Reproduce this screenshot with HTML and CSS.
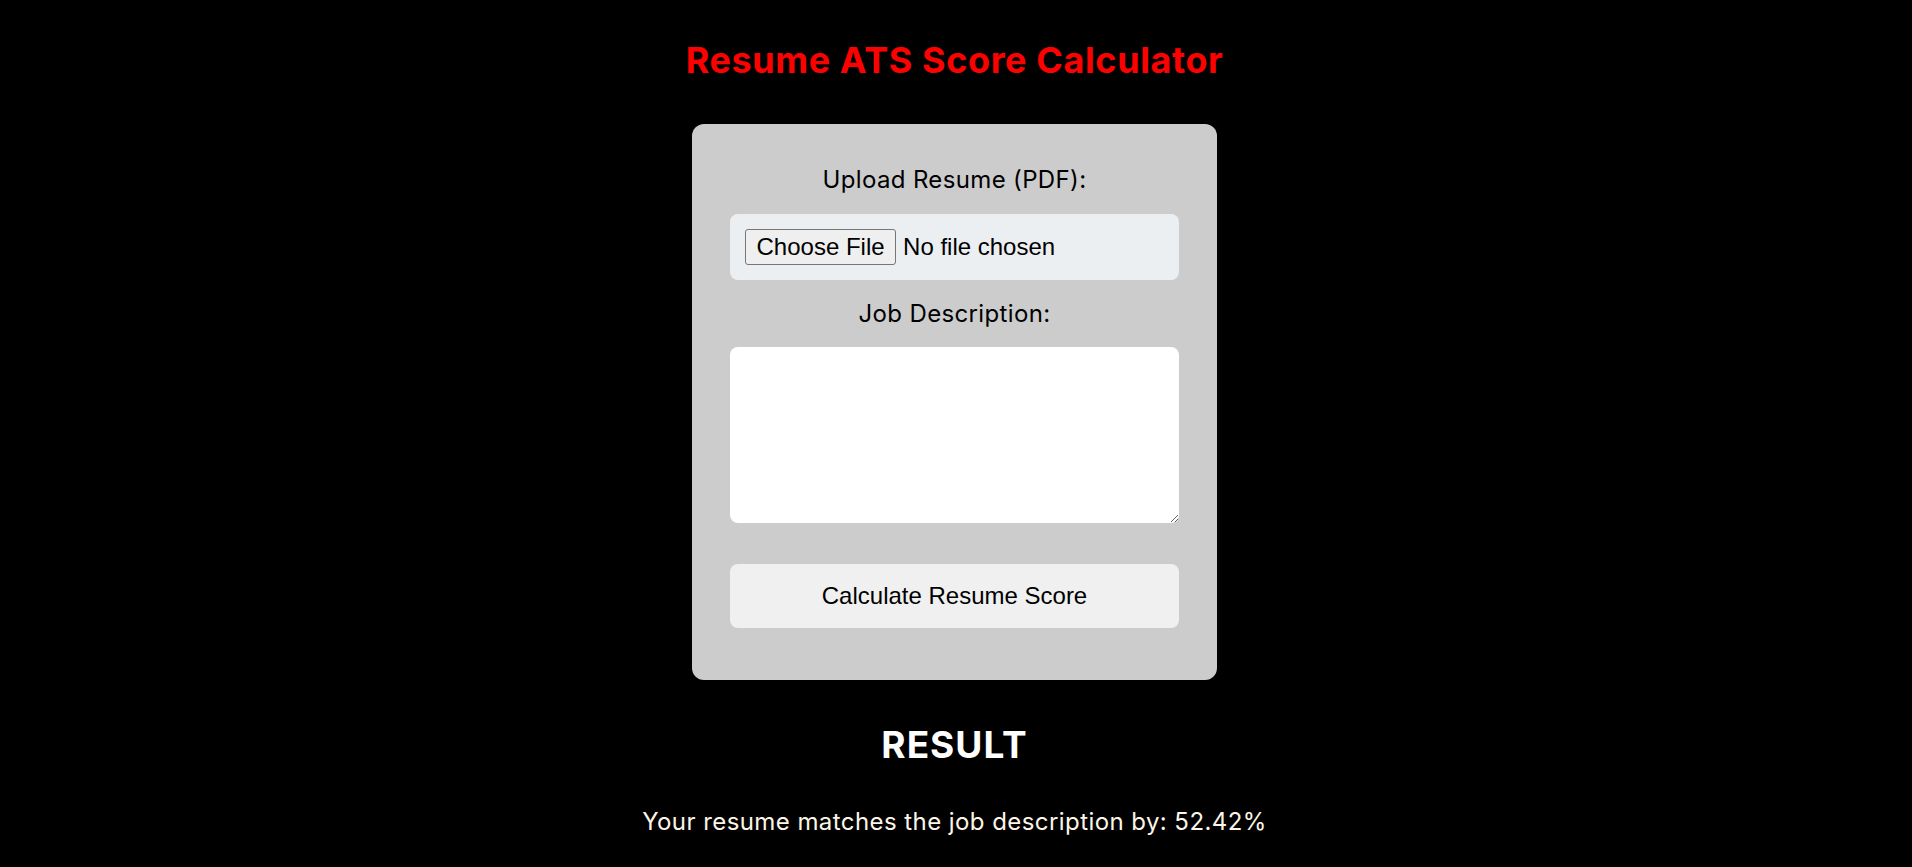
FILE: index.html
```html
<!DOCTYPE html>
<html lang="en">
<head>
<meta charset="utf-8">
<title>Resume ATS Score Calculator</title>
<link rel="stylesheet" href="styles.css">
</head>
<body>
<main class="page">
  <h1 class="title">Resume ATS Score Calculator</h1>
  <form class="card">
    <label class="field-label" for="resume">Upload Resume (PDF):</label>
    <label class="file-box" for="resume">
      <span class="file-btn">Choose File</span>
      <span class="file-name">No file chosen</span>
      <input class="file-hidden" type="file" id="resume" accept=".pdf">
    </label>
    <label class="field-label" for="jd">Job Description:</label>
    <textarea class="jd" id="jd"></textarea>
    <button class="submit" type="button">Calculate Resume Score</button>
  </form>
  <h2 class="result-title">RESULT</h2>
  <p class="result-text">Your resume matches the job description by: 52.42%</p>
</main>
</body>
</html>
```
FILE: styles.css
```css
* { box-sizing: border-box; }
html, body { margin: 0; padding: 0; background: #000; }
body { font-family: Inter, "Open Sans", sans-serif; }

.page {
  display: flex;
  flex-direction: column;
  align-items: center;
  padding: 39px 3px 0 0;
}

.title {
  margin: 0;
  font-size: 36px;
  line-height: 43px;
  font-weight: 700;
  letter-spacing: 0.6px;
  color: #ff0000;
}

.card {
  margin-top: 42px;
  width: 525px;
  background: #cccccc;
  border-radius: 12px;
  padding: 41px 38px 52px;
  display: flex;
  flex-direction: column;
  align-items: stretch;
}

.field-label {
  display: block;
  text-align: center;
  font-size: 24px;
  line-height: 30px;
  letter-spacing: 0.35px;
  color: #000;
  margin-bottom: 18.5px;
}

.file-box {
  display: flex;
  align-items: center;
  background: #eceff1;
  border-radius: 8px;
  padding: 15px;
  margin-bottom: 19px;
  font-family: "Liberation Sans", Arial, sans-serif;
  font-size: 24px;
  color: #000;
  cursor: pointer;
}

.file-btn {
  display: inline-flex;
  align-items: center;
  height: 36px;
  padding: 0 10.5px;
  border: 1px solid #767676;
  border-radius: 3px;
  background: #efefef;
}

.file-name { margin-left: 7px; }

.file-hidden { display: none; }

.jd {
  display: block;
  width: 100%;
  height: 176px;
  border: none;
  border-radius: 8px;
  background: #fff;
  padding: 10px;
  font-family: "Liberation Sans", Arial, sans-serif;
  font-size: 20px;
  margin: 0 0 41px;
}

.submit {
  height: 64px;
  border: none;
  border-radius: 8px;
  background: #f0f0f0;
  font-family: "Liberation Sans", Arial, sans-serif;
  font-size: 24px;
  color: #000;
  cursor: pointer;
}

.result-title {
  margin: 42px 0 0;
  font-size: 37px;
  line-height: 45px;
  font-weight: 700;
  letter-spacing: 1px;
  color: #fff;
}

.result-text {
  margin: 40px 0 0;
  font-size: 24px;
  line-height: 30px;
  letter-spacing: 0.43px;
  color: #fdf5e6;
}
```
